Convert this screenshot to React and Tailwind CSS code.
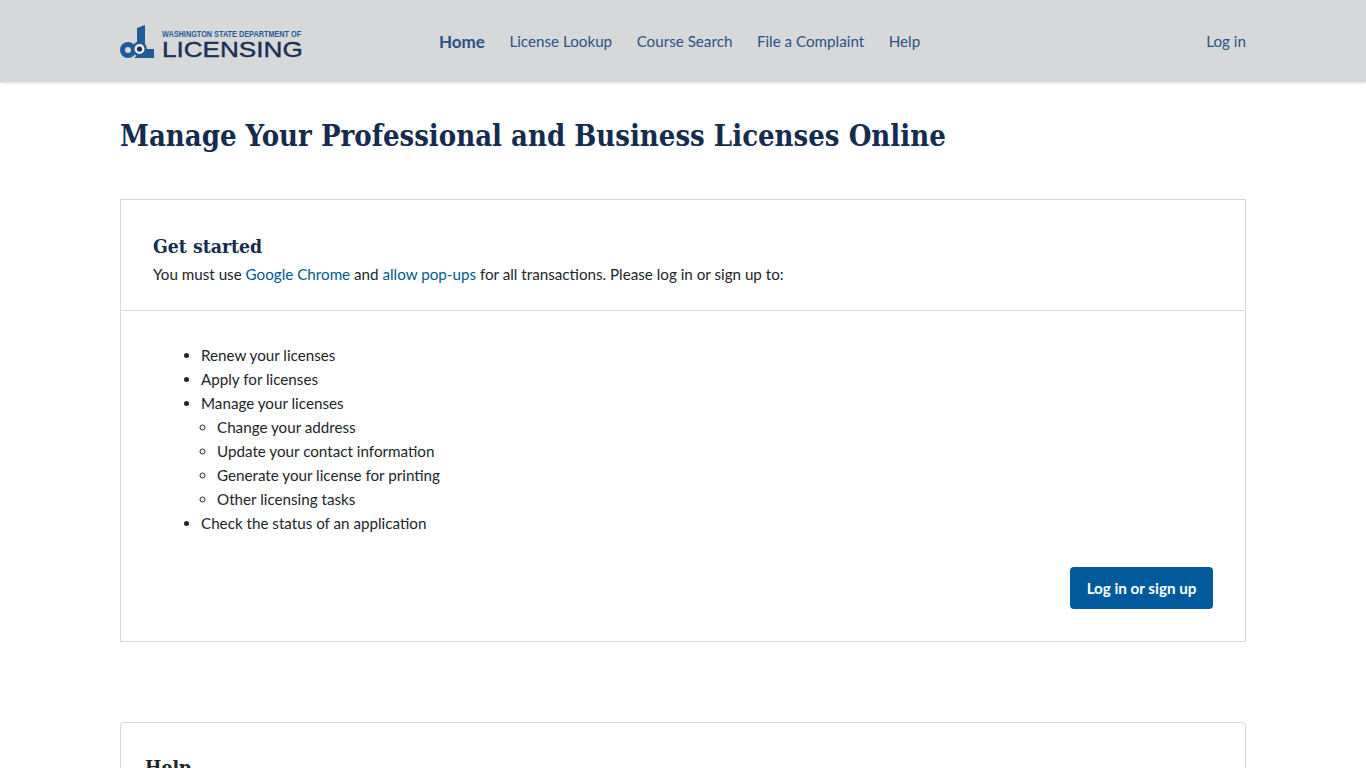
const Logo = () => (
  <div className="flex items-center gap-[7px]">
    <svg width="35" height="34" viewBox="0 0 35 34" className="shrink-0 mt-[2px]">
      <circle cx="8" cy="25" r="8" fill="#1f5a99" />
      <circle cx="8" cy="25" r="3" fill="#d6d8da" />
      <circle cx="19.5" cy="24" r="7.5" fill="#1f5a99" />
      <path d="M17 3 L25 0 L25 24 L17 24 Z" fill="#1f5a99" />
      <path d="M24 24 L34 24 L34 33 L14 33 Z" fill="#1f5a99" />
      <circle cx="19.5" cy="24" r="5" fill="#eceef0" />
      <circle cx="19.5" cy="24" r="2.6" fill="#1a2f55" />
    </svg>
    <div className="flex flex-col gap-[2px] mt-[6px] font-['Liberation_Sans',sans-serif]">
      <span className="text-[9px] leading-[10px] font-bold text-[#1f5a99] whitespace-nowrap scale-x-[0.81] origin-left w-[139px]">WASHINGTON STATE DEPARTMENT OF</span>
      <span className="text-[22.5px] leading-[18px] text-[#1a2f55] scale-x-[1.16] origin-left w-[120px] [-webkit-text-stroke:0.4px_#1a2f55]">LICENSING</span>
    </div>
  </div>
);

const items = ['License Lookup', 'Course Search', 'File a Complaint', 'Help'];

export default function App() {
  return (
    <div className="font-['Lato',sans-serif] text-[15.2px] text-[#212529] bg-white h-[768px] overflow-hidden">
      <header className="bg-[#d6d8da] h-[82px] shadow-sm px-[120px] flex items-center">
        <div className="w-[319px]"><Logo /></div>
        <nav className="flex items-center gap-[24.5px] pt-[1px] text-[#2a5288]">
          <a className="text-[17px] font-bold">Home</a>
          {items.map((i) => <a key={i}>{i}</a>)}
        </nav>
        <a className="ml-auto pt-[1px] text-[#2a5288]">Log in</a>
      </header>
      <main className="px-[120px]">
        <h1 className="font-['DejaVu_Serif_Condensed','DejaVu_Serif',serif] text-[29px] leading-[38px] font-bold text-[#152c4e] mt-[35px] mb-[44px]">Manage Your Professional and Business Licenses Online</h1>
        <section className="border border-[#d6d8da]">
          <div className="px-8 pt-[33px] border-b border-[#d6d8da] h-[111px]">
            <h2 className="font-['DejaVu_Serif_Condensed','DejaVu_Serif',serif] text-[19.3px] leading-7 font-bold text-[#152c4e]">Get started</h2>
            <p className="mt-[2px]">You must use <a className="text-[#005a8c]">Google Chrome</a> and <a className="text-[#005a8c]">allow pop-ups</a> for all transactions. Please log in or sign up to:</p>
          </div>
          <div className="px-8 pt-8 pb-8">
            <ul className="list-disc pl-12 leading-6">
              <li>Renew your licenses</li>
              <li>Apply for licenses</li>
              <li>Manage your licenses
                <ul className="list-[circle] pl-4">
                  <li>Change your address</li>
                  <li>Update your contact information</li>
                  <li>Generate your license for printing</li>
                  <li>Other licensing tasks</li>
                </ul>
              </li>
              <li>Check the status of an application</li>
            </ul>
            <div className="flex justify-end mt-8">
              <button className="bg-[#005a9c] text-white font-bold rounded w-[143px] h-[42px] pt-[1px]">Log in or sign up</button>
            </div>
          </div>
        </section>
        <section className="border border-[#d6d8da] rounded mt-20 px-6 pt-[31px]">
          <h2 className="font-['DejaVu_Serif_Condensed','DejaVu_Serif',serif] text-[19.3px] leading-7 font-bold text-[#212529]">Help</h2>
        </section>
      </main>
    </div>
  );
}
